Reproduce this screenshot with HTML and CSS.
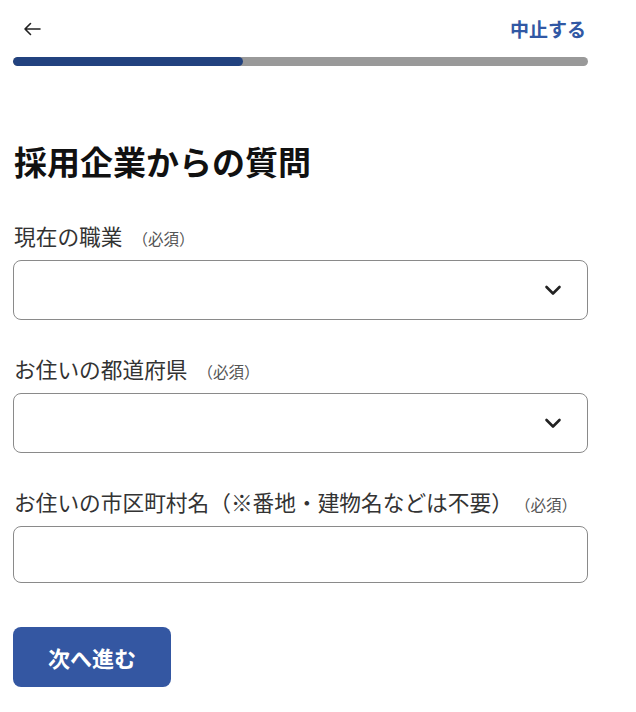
FILE: index.html
```html
<!DOCTYPE html>
<html lang="ja">
<head>
<meta charset="utf-8">
<title>採用企業からの質問</title>
<link rel="stylesheet" href="styles.css">
</head>
<body>
<div class="page">
  <header class="topbar">
    <button class="back" aria-label="戻る">
      <svg width="18" height="14" viewBox="0 0 18 14"><path d="M17 7H2M7.5 1.5L2 7l5.5 5.5" fill="none" stroke="#222" stroke-width="1.6" stroke-linecap="round" stroke-linejoin="round"/></svg>
    </button>
    <a class="cancel">中止する</a>
  </header>
  <div class="progress"><div class="progress-fill" style="width:40%"></div></div>

  <h1 class="title">採用企業からの質問</h1>

  <div class="field">
    <label class="label">現在の職業<span class="req">（必須）</span></label>
    <div class="select">
      <svg class="chev" width="18" height="12" viewBox="0 0 18 12"><path d="M2.5 3l6.5 6.5L15.5 3" fill="none" stroke="#222" stroke-width="2.6" stroke-linecap="round" stroke-linejoin="round"/></svg>
    </div>
  </div>

  <div class="field">
    <label class="label">お住いの都道府県<span class="req">（必須）</span></label>
    <div class="select">
      <svg class="chev" width="18" height="12" viewBox="0 0 18 12"><path d="M2.5 3l6.5 6.5L15.5 3" fill="none" stroke="#222" stroke-width="2.6" stroke-linecap="round" stroke-linejoin="round"/></svg>
    </div>
  </div>

  <div class="field">
    <label class="label">お住いの市区町村名（※番地・建物名などは不要）<span class="req">（必須）</span></label>
    <div class="input"></div>
  </div>

  <button class="next">次へ進む</button>
</div>
</body>
</html>
```
FILE: styles.css
```css
* { box-sizing: border-box; }
body {
  margin: 0;
  background: #fff;
  font-family: "Noto Sans CJK JP", "Noto Sans", sans-serif;
  color: #333;
}
.page {
  padding: 0 48px 0 13px;
}
.topbar {
  height: 57px;
  display: flex;
  align-items: center;
  justify-content: space-between;
}
.back {
  border: 0;
  background: none;
  padding: 0;
  margin-left: 10px;
  display: flex;
  align-items: center;
}
.cancel {
  font-size: 19px;
  font-weight: 700;
  color: #3158a4;
  line-height: 1;
  margin-right: 2px;
}
.progress {
  height: 9px;
  border-radius: 5px;
  background: #999999;
  overflow: hidden;
}
.progress-fill {
  height: 100%;
  background: #22427f;
  border-radius: 5px;
}
.title {
  margin: 71px 0 0 1px;
  font-size: 33px;
  line-height: 48px;
  font-weight: 700;
  color: #111;
}
.field {
  margin-top: 36px;
}
.field + .field {
  margin-top: 34px;
}
.label {
  display: block;
  font-size: 21.7px;
  line-height: 30px;
  color: #333;
  margin-left: 1px;
}
.req {
  font-size: 15.5px;
  color: #555;
  margin-left: 10px;
}
.select, .input {
  margin-top: 7px;
  height: 60px;
  border: 1px solid #8a8a8a;
  border-radius: 8px;
  display: flex;
  align-items: center;
  justify-content: flex-end;
  padding-right: 25px;
}
.input {
  height: 57px;
}
.next {
  margin-top: 44px;
  width: 158px;
  height: 60px;
  border: 0;
  border-radius: 8px;
  background: #3457a2;
  color: #fff;
  font-family: inherit;
  font-size: 22px;
  font-weight: 700;
}
```
